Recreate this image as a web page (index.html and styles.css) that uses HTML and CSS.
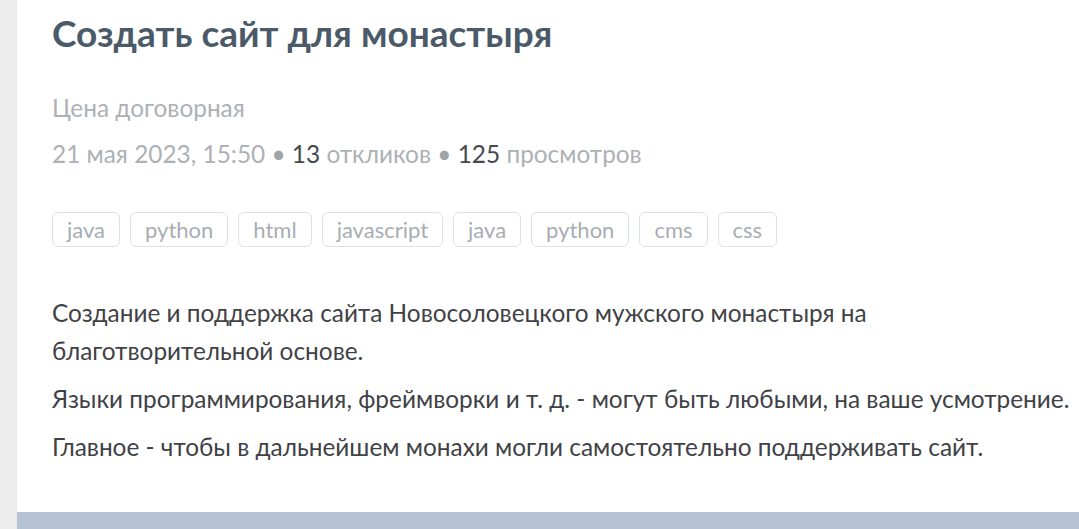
FILE: index.html
```html
<!DOCTYPE html>
<html lang="ru">
<head>
<meta charset="utf-8">
<title>Создать сайт для монастыря</title>
<link rel="stylesheet" href="styles.css">
</head>
<body>
<div class="page">
  <article class="card">
    <h1 class="title">Создать сайт для монастыря</h1>
    <div class="info">
      <div class="price">Цена договорная</div>
      <div class="meta">21 мая 2023, 15:50 <span class="dot">•</span> <span class="num">13</span> откликов <span class="dot">•</span> <span class="num">125</span> просмотров</div>
    </div>
    <ul class="tags">
      <li class="tag">java</li>
      <li class="tag">python</li>
      <li class="tag">html</li>
      <li class="tag">javascript</li>
      <li class="tag">java</li>
      <li class="tag">python</li>
      <li class="tag">cms</li>
      <li class="tag">css</li>
    </ul>
    <div class="desc">
      <p>Создание и поддержка сайта Новосоловецкого мужского монастыря на<br>благотворительной основе.</p>
      <p>Языки программирования, фреймворки и т. д. - могут быть любыми, на ваше усмотрение.</p>
      <p>Главное - чтобы в дальнейшем монахи могли самостоятельно поддерживать сайт.</p>
    </div>
  </article>
  <div class="bar"></div>
</div>
</body>
</html>
```
FILE: styles.css
```css
html, body {
  margin: 0;
  padding: 0;
}
body {
  background: #ececec;
  font-family: Lato, "Noto Sans", sans-serif;
  overflow: hidden;
}
.page {
  margin-left: 17px;
  height: 529px;
  display: flex;
  flex-direction: column;
}
.card {
  background: #ffffff;
  padding: 11px 0 0 35px;
  height: 512px;
  box-sizing: border-box;
}
.title {
  margin: 0;
  font-size: 37px;
  line-height: 44px;
  font-weight: 700;
  color: #4b5a69;
  white-space: nowrap;
}
.info {
  margin-top: 30px;
  font-size: 24.4px;
  line-height: 46px;
  color: #adb1b5;
  white-space: nowrap;
}
.meta .num {
  color: #45494e;
}
.meta .dot {
  color: #9ea3a8;
}
.tags {
  list-style: none;
  margin: 35px 0 0;
  padding: 0;
  display: flex;
  gap: 10px;
}
.tag {
  border: 1px solid #dde2e4;
  border-radius: 6px;
  padding: 0 14px;
  font-size: 22px;
  line-height: 33px;
  color: #a7adb2;
}
.desc {
  margin-top: 47px;
  font-size: 24.4px;
  line-height: 38px;
  color: #3f4246;
  white-space: nowrap;
}
.desc p {
  margin: 0 0 10px;
}
.bar {
  flex: 1;
  background: #b5c3d5;
}
```
